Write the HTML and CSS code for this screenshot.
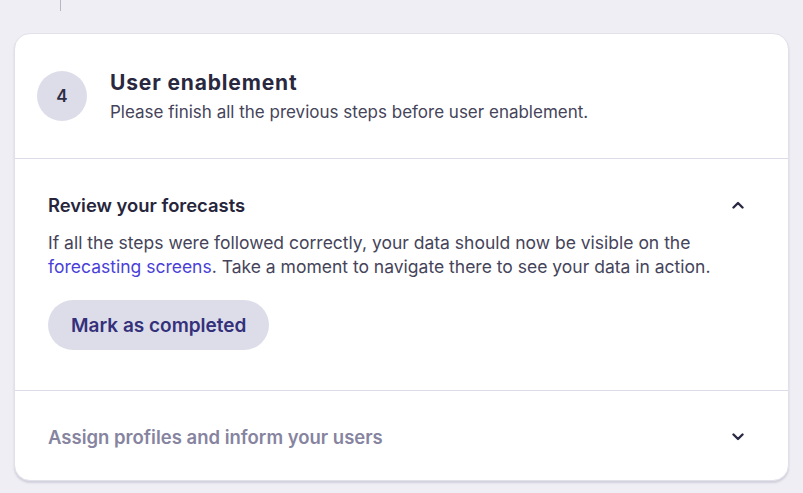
FILE: index.html
```html
<!DOCTYPE html>
<html>
<head>
<meta charset="utf-8">
<link rel="stylesheet" href="styles.css">
</head>
<body>
<div class="page">
  <div class="rail"></div>
  <section class="card">
    <header class="step-head">
      <div class="step-num">4</div>
      <div class="step-text">
        <h2 class="step-title">User enablement</h2>
        <p class="step-sub">Please finish all the previous steps before user enablement.</p>
      </div>
    </header>
    <div class="item open">
      <div class="item-head">
        <h3 class="item-title">Review your forecasts</h3>
        <svg class="chev" width="12" height="8" viewBox="0 0 12 8"><path d="M1.5 6.5 L6 2 L10.5 6.5" fill="none" stroke="#2b2a45" stroke-width="2.4" stroke-linecap="round" stroke-linejoin="round"/></svg>
      </div>
      <p class="item-body">If all the steps were followed correctly, your data should now be visible on the <a class="link" href="#">forecasting screens</a>. Take a moment to navigate there to see your data in action.</p>
      <button class="btn">Mark as completed</button>
    </div>
    <div class="item closed">
      <div class="item-head">
        <h3 class="item-title muted">Assign profiles and inform your users</h3>
        <svg class="chev" width="12" height="8" viewBox="0 0 12 8"><path d="M1.5 1.5 L6 6 L10.5 1.5" fill="none" stroke="#2b2a45" stroke-width="2.4" stroke-linecap="round" stroke-linejoin="round"/></svg>
      </div>
    </div>
  </section>
</div>
</body>
</html>
```
FILE: styles.css
```css
html, body {
  margin: 0;
  padding: 0;
  background: #efeef4;
  font-family: "Inter", "Noto Sans", sans-serif;
  color: #2a2940;
}
.page {
  width: 803px;
  height: 493px;
  overflow: hidden;
}
.rail {
  width: 1px;
  height: 11px;
  margin-left: 60px;
  background: #b8b7c2;
}
.card {
  margin: 22px 0 0 14px;
  width: 775px;
  height: 448px;
  box-sizing: border-box;
  background: #fff;
  border: 1px solid #e2e1ea;
  border-radius: 16px;
  box-shadow: 0 2px 2px rgba(120, 118, 150, 0.25);
  display: flex;
  flex-direction: column;
  overflow: hidden;
}
.step-head {
  height: 125px;
  flex: none;
  box-sizing: border-box;
  border-bottom: 1px solid #dcdbe6;
  display: flex;
  align-items: center;
  padding: 0 0 0 22px;
  gap: 23px;
}
.step-num {
  width: 50px;
  height: 50px;
  border-radius: 50%;
  background: #dcdde9;
  display: flex;
  align-items: center;
  justify-content: center;
  font-size: 17px;
  font-weight: 600;
  color: #2e2d45;
  flex: none;
}
.step-text {
  display: flex;
  flex-direction: column;
  gap: 5px;
}
.step-title {
  margin: 0;
  font-size: 21px;
  line-height: 26px;
  font-weight: 700;
  color: #29283f;
  letter-spacing: 0.85px;
}
.step-sub {
  margin: 0;
  font-size: 17px;
  line-height: 22px;
  color: #45445a;
}
.item {
  padding: 0 41px 0 33px;
}
.item.open {
  height: 232px;
  flex: none;
  box-sizing: border-box;
  border-bottom: 1px solid #dcdbe6;
  padding-top: 35px;
}
.item.closed {
  flex: 1;
  display: flex;
  align-items: center;
  padding-top: 2px;
}
.item.closed .item-head {
  flex: 1;
}
.item-head {
  display: flex;
  align-items: center;
  justify-content: space-between;
  height: 22px;
}
.item-title {
  margin: 0;
  font-size: 18.4px;
  font-weight: 600;
  color: #26253b;
}
.item-title.muted {
  font-size: 18.5px;
  color: #86849f;
}
.chev {
  display: block;
  margin-right: 3px;
}
.item-body {
  margin: 15px 0 0 0;
  font-size: 17.5px;
  line-height: 24px;
  color: #45445a;
  max-width: 680px;
}
.link {
  color: #4a3fd8;
  text-decoration: none;
}
.btn {
  display: block;
  margin-top: 21px;
  height: 50px;
  padding: 0 23px;
  border: none;
  border-radius: 25px;
  background: #dcdde9;
  font-family: "Inter", "Noto Sans", sans-serif;
  font-size: 19px;
  font-weight: 600;
  color: #34307a;
}
```
